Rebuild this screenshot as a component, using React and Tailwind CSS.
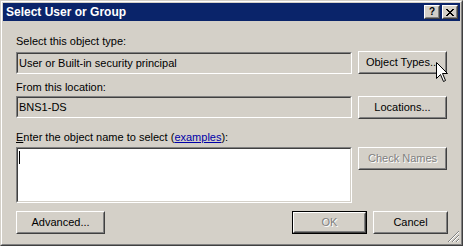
import React from "react";

function Btn({ children, className = "", disabled = false, def = false }) {
  const face = (
    <div className="h-full w-full border border-t-white border-l-white border-r-[#404040] border-b-[#404040]">
      <div className="flex h-full w-full items-center justify-center border border-t-[#d4d0c8] border-l-[#d4d0c8] border-r-[#808080] border-b-[#808080]">
        <span
          className={
            disabled
              ? "text-[#808080] [text-shadow:1px_1px_0_#ffffff]"
              : "text-black"
          }
        >
          {children}
        </span>
      </div>
    </div>
  );
  return (
    <div className={`h-[23px] shrink-0 ${className}`}>
      {def ? <div className="h-full w-full border border-black">{face}</div> : face}
    </div>
  );
}

function Sunken({ children, className = "", inner = "bg-[#d4d0c8]" }) {
  return (
    <div
      className={`border border-t-[#808080] border-l-[#808080] border-r-white border-b-white ${className}`}
    >
      <div
        className={`h-full w-full border border-t-[#404040] border-l-[#404040] border-r-[#d4d0c8] border-b-[#d4d0c8] ${inner}`}
      >
        {children}
      </div>
    </div>
  );
}

function CapBtn({ children }) {
  return (
    <div className="h-[14px] w-[16px] border border-t-white border-l-white border-r-[#404040] border-b-[#404040]">
      <div className="flex h-full w-full items-center justify-center border border-t-[#d4d0c8] border-l-[#d4d0c8] border-r-[#808080] border-b-[#808080] bg-[#d4d0c8]">
        {children}
      </div>
    </div>
  );
}

export default function App() {
  return (
    <div className="relative h-[246px] w-[463px] bg-[#d4d0c8] font-['Liberation_Sans',Arial,sans-serif] text-[11px] leading-[13px] text-black">
      <div className="h-full w-full border border-t-[#d4d0c8] border-l-[#d4d0c8] border-r-[#404040] border-b-[#404040]">
        <div className="flex h-full w-full flex-col border border-t-white border-l-white border-r-[#808080] border-b-[#808080] p-px">
          {/* title bar */}
          <div className="flex h-[18px] shrink-0 items-center bg-[#0a246a] pl-[3px] pr-[2px]">
            <span className="flex-1 text-[12px] font-bold text-white">Select User or Group</span>
            <div className="flex gap-[2px]">
              <CapBtn>
                <span className="text-[10px] font-bold leading-none text-black">?</span>
              </CapBtn>
              <CapBtn>
                <svg width="8" height="7" viewBox="0 0 8 7" shapeRendering="crispEdges">
                  <path
                    d="M0 0h2v1H0zM6 0h2v1H6zM1 1h2v1H1zM5 1h2v1H5zM2 2h4v1H2zM3 3h2v1H3zM2 4h4v1H2zM1 5h2v1H1zM5 5h2v1H5zM0 6h2v1H0zM6 6h2v1H6z"
                    fill="#000"
                  />
                </svg>
              </CapBtn>
            </div>
          </div>

          {/* body */}
          <div className="flex flex-1 flex-col pl-[13px] pr-[12px]">
            <div className="mt-[14px]">Select this object type:</div>
            <div className="mt-[3px] flex items-start gap-[6px]">
              <Sunken className="mt-px h-[22px] w-[336px]">
                <div className="pl-px pt-[3px]">User or Built-in security principal</div>
              </Sunken>
              <Btn className="w-[89px]">Object Types...</Btn>
            </div>

            <div className="mt-[7px]">From this location:</div>
            <div className="mt-[2px] flex items-start gap-[6px]">
              <Sunken className="h-[22px] w-[336px]">
                <div className="pl-px pt-[3px]">BNS1-DS</div>
              </Sunken>
              <Btn className="w-[89px]">Locations...</Btn>
            </div>

            <div className="mt-[12px]">
              <span className="underline">E</span>nter the object name to select (<span className="text-[#0000a8] underline">examples</span>):
            </div>
            <div className="mt-[3px] flex items-start gap-[6px]">
              <Sunken className="h-[56px] w-[336px]" inner="bg-white">
                <div className="ml-px mt-[2px] h-[13px] w-px bg-black" />
              </Sunken>
              <Btn className="w-[89px]" disabled>
                Check Names
              </Btn>
            </div>

            <div className="mt-[8px] flex items-start">
              <Btn className="w-[89px]">Advanced...</Btn>
              <div className="flex-1" />
              <Btn className="w-[75px]" disabled def>
                OK
              </Btn>
              <Btn className="ml-[6px] w-[75px]">Cancel</Btn>
            </div>
          </div>
        </div>
      </div>

      {/* size grip */}
      <svg
        className="absolute bottom-[3px] right-[3px]"
        width="12"
        height="12"
        viewBox="0 0 12 12"
        shapeRendering="crispEdges"
      >
        <path d="M11 0L0 11M11 4L4 11M11 8L8 11" stroke="#808080" strokeWidth="1.4" />
        <path d="M11 1L1 11M11 5L5 11M11 9L9 11" stroke="#ffffff" strokeWidth="1" />
      </svg>

      {/* mouse cursor */}
      <svg
        className="absolute left-[436px] top-[62px]"
        width="13"
        height="21"
        viewBox="0 0 13 21"
      >
        <path
          d="M0.5 0.5V16.5L4.5 12.5L7.5 19.5L9.5 18.5L6.5 11.5H11.5Z"
          fill="#fff"
          stroke="#000"
          strokeWidth="1"
        />
      </svg>
    </div>
  );
}
